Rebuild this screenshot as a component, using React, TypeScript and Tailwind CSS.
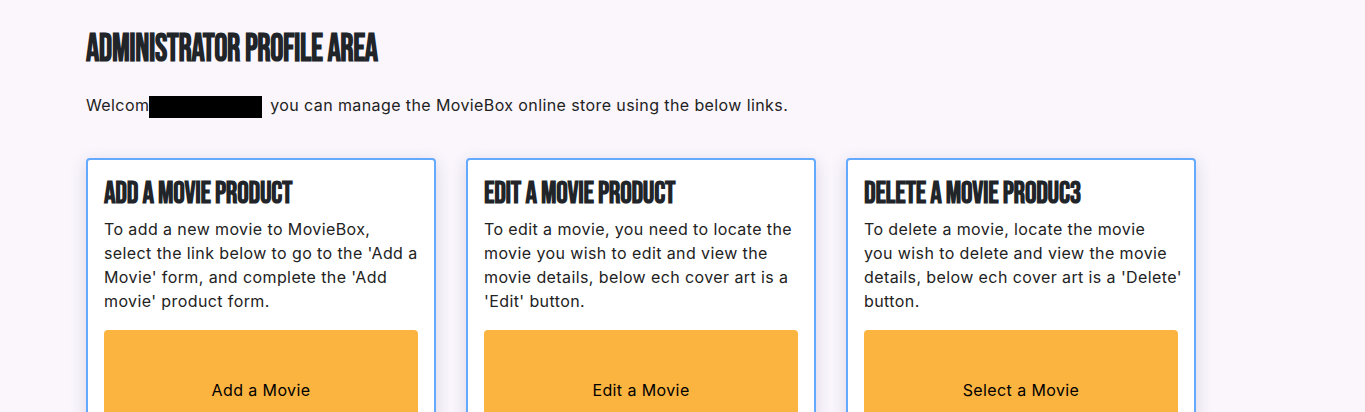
import React from 'react';

/**
 * AdminProfile
 * - Title, welcome line and three action cards (add / edit / delete).
 * - Card copy is kept as explicit lines so the wrap matches the design.
 */

type ActionCard = {
    title: string;
    lines: string[];
    button: string;
};

const cards: ActionCard[] = [
    {
        title: 'Add a Movie Product',
        lines: [
            'To add a new movie to MovieBox,',
            "select the link below to go to the 'Add a",
            "Movie' form, and complete the 'Add",
            "movie' product form.",
        ],
        button: 'Add a Movie',
    },
    {
        title: 'Edit a Movie Product',
        lines: [
            'To edit a movie, you need to locate the',
            'movie you wish to edit and view the',
            'movie details, below ech cover art is a',
            "'Edit' button.",
        ],
        button: 'Edit a Movie',
    },
    {
        title: 'Delete a Movie Produc3',
        lines: [
            'To delete a movie, locate the movie',
            'you wish to delete and view the movie',
            "details, below ech cover art is a 'Delete'",
            'button.',
        ],
        button: 'Select a Movie',
    },
];

const headingFont = "font-['Bebas_Neue','Liberation_Sans_Narrow','DejaVu_Sans_Condensed',sans-serif]";

export default function App() {
    return (
        <div className="min-h-[412px] bg-[#faf6fc] text-[#212529] font-['Inter','Noto_Sans',sans-serif] px-[86px] pt-[29px] overflow-hidden">
            <h1 className={`${headingFont} font-bold uppercase text-[39px] leading-[42px] tracking-[-0.5px] scale-x-[0.85] origin-left`}>
                Administrator Profile Area
            </h1>
            <p className="mt-[22px] text-[16px] leading-[24px] tracking-[0.4px] text-[#222] whitespace-nowrap">
                Welcom
                <span className="inline-block align-middle mr-[3px] w-[113px] h-[22px] bg-black" />
                {' '}you can manage the MovieBox online store using the below links.
            </p>

            <div className="mt-[40px] flex gap-[30px]">
                {cards.map(card => (
                    <div
                        key={card.title}
                        className="w-[350px] shrink-0 bg-white border-2 border-[#63aaff] rounded-[4px] shadow-[0_4px_16px_rgba(80,60,110,0.18)] p-4"
                    >
                        <h2 className={`${headingFont} font-bold uppercase text-[31px] leading-[36px] tracking-[-0.3px] scale-x-[0.93] origin-left`}>
                            {card.title}
                        </h2>
                        <p className="mt-[5px] text-[16px] leading-[24px] tracking-[0.4px] text-[#222]">
                            {card.lines.map(line => (
                                <span key={line} className="block whitespace-nowrap">{line}</span>
                            ))}
                        </p>
                        <button className="mt-[17px] w-full bg-[#fbb440] rounded-[4px] py-12 text-[16px] leading-[24px] tracking-[0.4px] text-black">
                            {card.button}
                        </button>
                    </div>
                ))}
            </div>
        </div>
    );
}
